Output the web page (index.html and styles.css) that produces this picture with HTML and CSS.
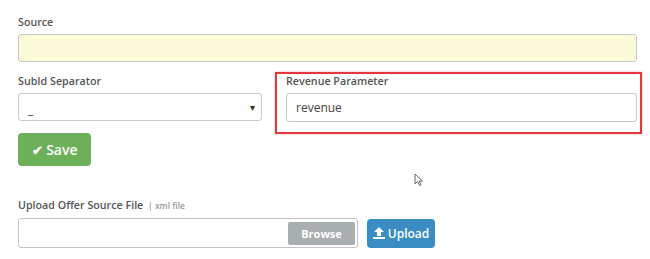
FILE: index.html
```html
<!DOCTYPE html>
<html>
<head>
<meta name="viewport" content="width=device-width, initial-scale=1.0">
<title>Offer Source</title>
<link rel="stylesheet" href="styles.css">
</head>
<body>

<div class="panel">
  <div class="group">
    <label class="lbl">Source</label>
    <div class="field field-yellow"></div>
  </div>

  <div class="row">
    <div class="col-left">
      <label class="lbl">SubId Separator</label>
      <div class="field select">
        <span>_</span>
        <span class="caret">&#9662;</span>
      </div>
    </div>
    <div class="col-right highlight">
      <label class="lbl">Revenue Parameter</label>
      <div class="field">revenue</div>
    </div>
  </div>

  <button class="btn btn-save" type="button"><span class="tick">&#10004;</span> Save</button>

  <div class="group upload-group">
    <label class="lbl">Upload Offer Source File <span class="hint">| xml file</span></label>
    <div class="upload-row">
      <div class="file-box">
        <span class="browse">Browse</span>
      </div>
      <button class="btn btn-upload" type="button">
        <svg width="12" height="12" viewBox="0 0 12 12"><path d="M6 0 L11 5 H8 V9 H4 V5 H1 Z M0 10 H12 V12 H0 Z" fill="#fff"/></svg>
        Upload
      </button>
    </div>
  </div>

  <svg class="cursor" width="10" height="14" viewBox="0 0 10 14"><path d="M1 1 L1 11 L3.5 8.5 L5.5 12.5 L7 11.8 L5 8 L8.5 8 Z" fill="#fff" stroke="#666" stroke-width="1"/></svg>
</div>

</body>
</html>
```

FILE: styles.css
```css
body {
  margin: 0;
  background: #fff;
  font-family: "Open Sans", "Liberation Sans", Arial, sans-serif;
  color: #555;
}

.panel {
  position: relative;
  padding: 15px 5px 0 18px;
}

.lbl {
  display: block;
  font-size: 10.7px;
  font-weight: 600;
  color: #555;
  line-height: 14px;
  margin-bottom: 5px;
}

.hint {
  font-size: 8.5px;
  color: #999;
  font-weight: 600;
  margin-left: 2px;
}

.field {
  box-sizing: border-box;
  height: 28px;
  border: 1px solid #c9c9c9;
  border-radius: 3px;
  background: #fff;
  font-size: 12px;
  color: #444;
  padding: 0 9px;
  display: flex;
  align-items: center;
}

.field-yellow {
  background: #fbfbd9;
  width: 619px;
}

.row {
  display: flex;
  margin-top: 10px;
}

.col-left {
  flex: 0 0 244px;
  padding-top: 2px;
}

.select {
  justify-content: space-between;
  padding-right: 6px;
}

.select span:first-child {
  padding-top: 4px;
}

.caret {
  font-size: 10px;
  color: #333;
}

.col-right {
  box-sizing: border-box;
  flex: 0 0 367px;
  margin-left: 13px;
  height: 62px;
  padding: 0 3px 0 9px;
}

.col-right .field {
  height: 29px;
}

.highlight {
  border: 2px solid #e4373d;
  box-shadow: 0 0 2px rgba(228, 55, 61, 0.4);
}

.btn {
  border: none;
  border-radius: 4px;
  color: #fff;
  font-family: inherit;
  font-weight: 600;
  cursor: pointer;
}

.btn-save {
  display: block;
  margin-top: -1px;
  width: 73px;
  height: 33px;
  background: #6cb15a;
  font-size: 14px;
}

.tick {
  font-size: 13px;
}

.upload-group {
  margin-top: 32px;
}

.upload-row {
  display: flex;
  align-items: center;
}

.file-box {
  box-sizing: border-box;
  width: 340px;
  height: 30px;
  border: 1px solid #c4c4c4;
  border-radius: 3px;
  display: flex;
  justify-content: flex-end;
  align-items: center;
  padding-right: 2px;
}

.browse {
  width: 67px;
  height: 23px;
  background: #a9aeb1;
  border-radius: 2px;
  color: #fff;
  font-size: 11px;
  font-weight: 700;
  display: flex;
  align-items: center;
  justify-content: center;
}

.btn-upload {
  margin-left: 9px;
  width: 68px;
  height: 29px;
  background: #3a8dc3;
  font-size: 12px;
  display: flex;
  align-items: center;
  justify-content: center;
  gap: 3px;
  padding: 0;
}

.cursor {
  position: absolute;
  left: 414px;
  top: 173px;
}
```
